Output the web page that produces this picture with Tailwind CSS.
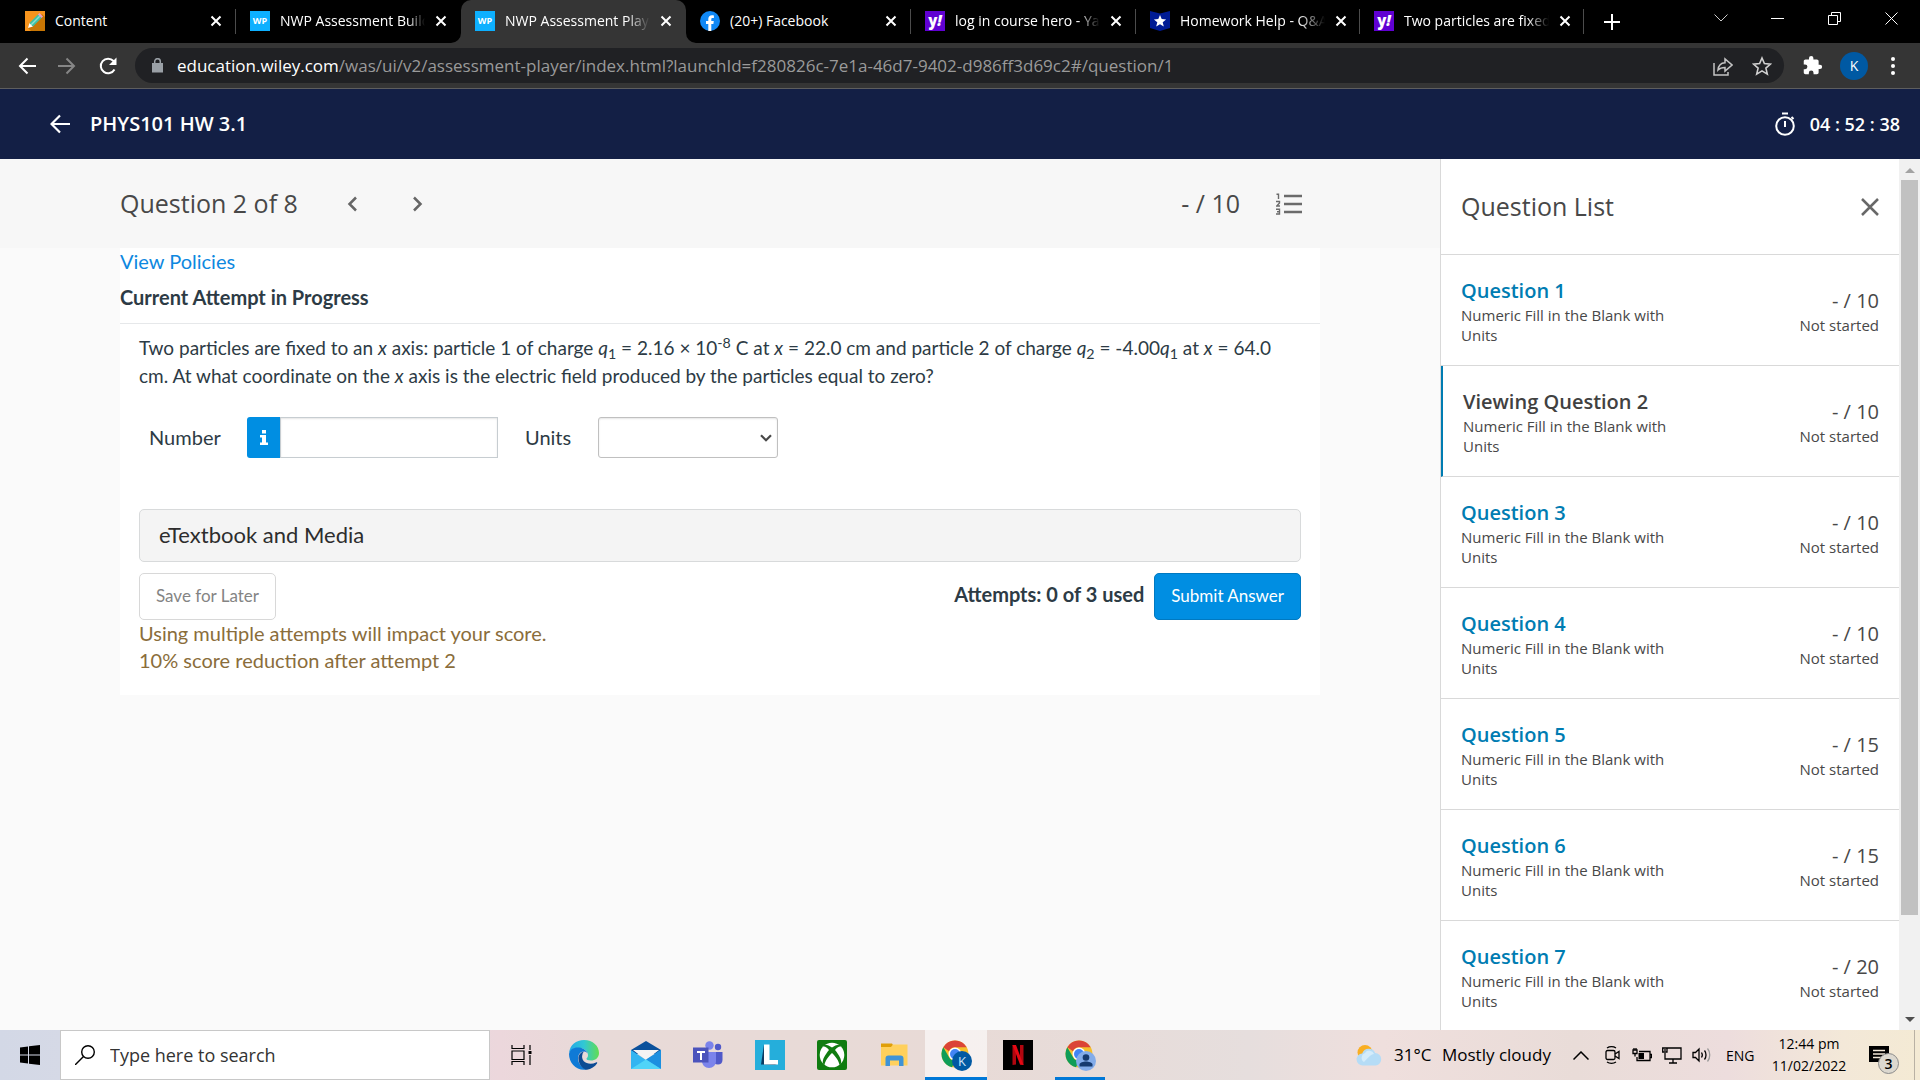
<!DOCTYPE html>
<html lang="en">
<head>
    <meta charset="UTF-8">
    <meta name="viewport" content="width=device-width, initial-scale=1.0">
    <title>NWP Assessment Player</title>
    <script src="https://cdn.jsdelivr.net/npm/@tailwindcss/browser@4"></script>
</head>
<body class="h-screen flex flex-col overflow-hidden bg-[#fafafa] font-['Open_Sans',sans-serif] text-[#484848]">

    <!-- TAB STRIP -->
    <div class="h-[43px] shrink-0 bg-black text-white text-[14px] flex pl-[11px]">
        <div class="w-[225px] flex items-center pl-3.5 pb-0.5 relative">
            <svg class="size-5 shrink-0" viewBox="0 0 20 20"><path fill="#f7941d" d="M0 0h20v20H0z"/><path fill="#c87604" d="M17 3l3 3v14H6l-3-3z"/><path fill="#fff" d="M3 17l1.500-5 3.500 3.500z"/><path fill="#3fc1a5" d="M4.500 12L13 3.500 16.500 7 8 15.500z"/><path fill="#8be0d0" d="M5.700 13.200l8.500-8.500 1 1-8.500 8.500z"/><path fill="#e9a0c8" d="M13 3.500L14.500 2 18 5.500 16.500 7z"/></svg>
            <span class="ml-2.5 w-[145px] whitespace-nowrap overflow-hidden">Content</span>
            <button class="ml-2.5 size-3" aria-label="Close tab"><svg viewBox="0 0 12 12" stroke="#fff" stroke-width="2"><path d="M1.500 1.500l9 9M10.500 1.500l-9 9"/></svg></button>
            <span class="absolute right-0 top-[9px] h-[25px] w-px bg-[#4c4c4c]"></span>
        </div>
        <div class="w-[225px] flex items-center pl-3.5 pb-0.5">
            <span class="size-5 shrink-0 bg-[#0db0ff] text-[9px] font-bold flex items-center justify-center">WP</span>
            <span class="ml-2.5 w-[145px] whitespace-nowrap overflow-hidden [mask-image:linear-gradient(to_right,#000_88%,transparent)]">NWP Assessment Builder</span>
            <button class="ml-2.5 size-3" aria-label="Close tab"><svg viewBox="0 0 12 12" stroke="#fff" stroke-width="2"><path d="M1.500 1.500l9 9M10.500 1.500l-9 9"/></svg></button>
        </div>
        <div class="w-[225px] flex items-center pl-3.5 pb-0.5 relative bg-[#353535] rounded-t-[10px]">
            <span class="size-5 shrink-0 bg-[#0db0ff] text-[9px] font-bold flex items-center justify-center">WP</span>
            <span class="ml-2.5 w-[145px] whitespace-nowrap overflow-hidden [mask-image:linear-gradient(to_right,#000_84%,transparent)]">NWP Assessment Player</span>
            <button class="ml-2.5 size-3" aria-label="Close tab"><svg viewBox="0 0 12 12" stroke="#fff" stroke-width="2"><path d="M1.500 1.500l9 9M10.500 1.500l-9 9"/></svg></button>
            <svg class="absolute right-full bottom-0 size-2.5" viewBox="0 0 10 10" fill="#353535"><path d="M10 0v10H0A10 10 0 0 0 10 0z"/></svg>
            <svg class="absolute left-full bottom-0 size-2.5" viewBox="0 0 10 10" fill="#353535"><path d="M0 0v10h10A10 10 0 0 1 0 0z"/></svg>
        </div>
        <div class="w-[225px] flex items-center pl-3.5 pb-0.5 relative">
            <svg class="size-5 shrink-0" viewBox="0 0 20 20"><circle cx="10" cy="10" r="10" fill="#1088f5"/><path fill="#fff" d="M8.300 20v-7H6v-3h2.300V8c0-2.500 1.500-3.800 3.700-3.800.9 0 1.700.1 1.900.2v2.500h-1.300c-1 0-1.300.5-1.300 1.300V10h2.500l-.4 3h-2.100v7z"/></svg>
            <span class="ml-2.5 w-[145px] whitespace-nowrap overflow-hidden">(20+) Facebook</span>
            <button class="ml-2.5 size-3" aria-label="Close tab"><svg viewBox="0 0 12 12" stroke="#fff" stroke-width="2"><path d="M1.500 1.500l9 9M10.500 1.500l-9 9"/></svg></button>
            <span class="absolute right-0 top-[9px] h-[25px] w-px bg-[#4c4c4c]"></span>
        </div>
        <div class="w-[225px] flex items-center pl-3.5 pb-0.5 relative">
            <span class="size-5 shrink-0 bg-[#6001d2] text-[15px] leading-4 font-extrabold flex items-center justify-center pb-0.5">y<i>!</i></span>
            <span class="ml-2.5 w-[145px] whitespace-nowrap overflow-hidden [mask-image:linear-gradient(to_right,#000_85%,transparent)]">log in course hero - Yahoo Search</span>
            <button class="ml-2.5 size-3" aria-label="Close tab"><svg viewBox="0 0 12 12" stroke="#fff" stroke-width="2"><path d="M1.500 1.500l9 9M10.500 1.500l-9 9"/></svg></button>
            <span class="absolute right-0 top-[9px] h-[25px] w-px bg-[#4c4c4c]"></span>
        </div>
        <div class="w-[224px] flex items-center pl-3.5 pb-0.5 relative">
            <svg class="size-5 shrink-0" viewBox="0 0 20 20"><path fill="#001b94" d="M0 0l10 2.500L20 0v17l-10 3-10-3z"/><path fill="#fff" d="M10 4l1.700 4.100 4.400.3-3.400 2.900 1.100 4.300L10 13.200l-3.800 2.400 1.100-4.300-3.400-2.900 4.400-.3z"/></svg>
            <span class="ml-2.5 w-[145px] whitespace-nowrap overflow-hidden [mask-image:linear-gradient(to_right,#000_82%,transparent)]">Homework Help - Q&amp;A from</span>
            <button class="ml-2.5 size-3" aria-label="Close tab"><svg viewBox="0 0 12 12" stroke="#fff" stroke-width="2"><path d="M1.500 1.500l9 9M10.500 1.500l-9 9"/></svg></button>
            <span class="absolute right-0 top-[9px] h-[25px] w-px bg-[#4c4c4c]"></span>
        </div>
        <div class="w-[224px] flex items-center pl-3.5 pb-0.5 relative">
            <span class="size-5 shrink-0 bg-[#6001d2] text-[15px] leading-4 font-extrabold flex items-center justify-center pb-0.5">y<i>!</i></span>
            <span class="ml-2.5 w-[145px] whitespace-nowrap overflow-hidden [mask-image:linear-gradient(to_right,#000_85%,transparent)]">Two particles are fixed to an</span>
            <button class="ml-2.5 size-3" aria-label="Close tab"><svg viewBox="0 0 12 12" stroke="#fff" stroke-width="2"><path d="M1.500 1.500l9 9M10.500 1.500l-9 9"/></svg></button>
            <span class="absolute right-0 top-[9px] h-[25px] w-px bg-[#4c4c4c]"></span>
        </div>
        <button class="ml-5 w-4" aria-label="New tab"><svg viewBox="0 0 16 16" stroke="#fff" stroke-width="2"><path d="M8 0v16M0 8h16"/></svg></button>
        <div class="ml-auto h-9 flex items-center">
            <button class="w-[57px] flex justify-center" aria-label="Search tabs"><svg class="w-3.5 h-2" viewBox="0 0 14 8" fill="none" stroke="#ccc"><path d="M.500.500L7 7 13.500.500"/></svg></button>
            <button class="w-[57px] flex justify-center" aria-label="Minimise"><svg class="w-[13px] h-3" viewBox="0 0 13 12" stroke="#fff"><path d="M0 6.500h13"/></svg></button>
            <button class="w-[57px] flex justify-center" aria-label="Restore"><svg class="size-[13px]" viewBox="0 0 13 13" fill="none" stroke="#fff"><path d="M.500 3.500h9v9h-9zM3.500 3V.500h9v9H10"/></svg></button>
            <button class="w-[57px] flex justify-center" aria-label="Close window"><svg class="size-[13px]" viewBox="0 0 13 13" stroke="#fff"><path d="M.500.500l12 12M12.500.500l-12 12"/></svg></button>
        </div>
    </div>

    <!-- ADDRESS BAR -->
    <div class="h-[46px] shrink-0 bg-[#353535] border-b border-[#5e5e5e] flex items-center pl-4">
        <button class="w-[22px] mr-[18px]" aria-label="Back"><svg viewBox="0 0 22 22" fill="none" stroke="#fff" stroke-width="2"><path d="M20 11H4M11.500 3.500L4 11l7.500 7.500"/></svg></button>
        <button class="w-[22px] mr-[19px]" aria-label="Forward"><svg viewBox="0 0 22 22" fill="none" stroke="#868686" stroke-width="2"><path d="M2 11h16M10.500 3.500L18 11l-7.500 7.500"/></svg></button>
        <button class="w-[22px] mr-4" aria-label="Reload"><svg viewBox="0 0 22 22" fill="none" stroke="#fff" stroke-width="2"><path d="M17.500 14.500A7.300 7.300 0 1 1 16.500 6L18 7.500"/><path fill="#fff" stroke="none" d="M19.500 2.500V10H12z"/></svg></button>
        <div class="flex-1 h-[35px] rounded-full bg-[#202124] flex items-center pl-[17px] pr-3">
            <svg class="w-[11px] h-[15px] mr-3.5 shrink-0" viewBox="0 0 11 15"><path fill="#9aa0a6" d="M0 5h11v9.500H0z"/><path fill="none" stroke="#9aa0a6" stroke-width="1.500" d="M2.700 6V3.500a2.800 2.800 0 0 1 5.600 0V6"/></svg>
            <span class="flex-1 text-[17px] text-[#9a9a9a] whitespace-nowrap"><span class="text-white">education.wiley.com</span>/was/ui/v2/assessment-player/index.html?launchId=f280826c-7e1a-46d7-9402-d986ff3d69c2#/question/1</span>
            <button class="w-5 mr-[19px]" aria-label="Share"><svg viewBox="0 0 20 20" fill="none" stroke="#c4c4c4" stroke-width="1.500"><path d="M1 7v12h14v-3"/><path d="M5 14c.5-5 3-7 7-7.200V3l7 6-7 6v-3.500c-3 0-5 .5-7 2.500z"/></svg></button>
            <button class="w-5" aria-label="Bookmark"><svg viewBox="0 0 20 20" fill="none" stroke="#d0d0d0" stroke-width="1.600"><path d="M10 2l2.400 5.600 6.100.5-4.600 4 1.400 6L10 14.900l-5.300 3.200 1.400-6-4.600-4 6.100-.5z"/></svg></button>
        </div>
        <div class="flex items-center pl-[18px] pr-[25px]">
            <button class="w-[21px] mr-[17px]" aria-label="Extensions"><svg viewBox="0 0 24 24" fill="#fff"><path d="M20.500 11H19V7c0-1.100-.9-2-2-2h-4V3.500a2.500 2.500 0 0 0-5 0V5H4c-1.100 0-2 .9-2 2v3.800h1.500a2.700 2.700 0 0 1 0 5.400H2V20c0 1.100.9 2 2 2h3.800v-1.500a2.700 2.700 0 0 1 5.400 0V22H17c1.100 0 2-.9 2-2v-4h1.500a2.500 2.500 0 0 0 0-5z"/></svg></button>
            <button class="size-7 mr-[23px] rounded-full bg-[#0059a3] text-white text-[14px] leading-7">K</button>
            <button class="w-1 h-[18px]" aria-label="Menu"><svg viewBox="0 0 4 18" fill="#fff"><circle cx="2" cy="2" r="2"/><circle cx="2" cy="9" r="2"/><circle cx="2" cy="16" r="2"/></svg></button>
        </div>
    </div>

    <!-- APP HEADER -->
    <header class="h-[70px] shrink-0 bg-[#131f45] text-white font-semibold flex items-center pl-[50px] pr-5">
        <button class="w-5 mr-5" aria-label="Back to course"><svg viewBox="0 0 20 20" fill="none" stroke="#fff" stroke-width="2.200"><path d="M20 10H2M10 1.500L1.500 10l8.500 8.500"/></svg></button>
        <h1 class="text-[20px]">PHYS101 HW 3.1</h1>
        <svg class="ml-auto w-[22px] h-6 mr-3.5" viewBox="0 0 22 24" fill="none" stroke="#fff" stroke-width="2"><circle cx="11" cy="14" r="8.800"/><path d="M8 1.500h6M11 9v6M17.500 5l2 2"/></svg>
        <span class="text-[18px]">04 : 52 : 38</span>
    </header>

    <div class="flex-1 min-h-0 flex">
        <!-- QUESTION -->
        <main class="flex-1 min-w-0">
            <div class="h-[89px] bg-[#f7f7f7] px-[120px] flex items-center text-[25px]">
                <h2>Question 2 of 8</h2>
                <button class="ml-[49px] w-[11px]" aria-label="Previous question"><svg viewBox="0 0 11 16" fill="none" stroke="#666" stroke-width="2.500"><path d="M9 1.500L2.500 8 9 14.500"/></svg></button>
                <button class="ml-[54px] w-[11px]" aria-label="Next question"><svg viewBox="0 0 11 16" fill="none" stroke="#666" stroke-width="2.500"><path d="M2 1.500L8.500 8 2 14.500"/></svg></button>
                <span class="ml-auto">- / 10</span>
                <button class="ml-9 mr-[18px] w-[26px]" aria-label="Question list"><svg viewBox="0 0 26 22" fill="none" stroke="#6b6b6b"><path stroke-width="2.400" d="M8 3h18M8 11h18M8 19h18"/><path stroke-width="1.400" d="M.500 1.200h2V6M0 8.500h3.500v1.500L.700 13H4M0 16.200h3.500v4.800H0M1 18.700h2.500"/></svg></button>
            </div>
            <section class="mx-[120px] pb-[21px] bg-white font-['Lato',sans-serif] text-[20px] leading-7 text-[#2d3b45]">
                <a href="#" class="block w-fit leading-[26px] text-[#0e88e0]">View Policies</a>
                <h3 class="font-bold pt-[9px] pb-3 border-b border-[#e6e8ea]">Current Attempt in Progress</h3>
                <div class="pt-2.5 px-[19px]">
                    <p class="text-[19px]">Two particles are fixed to an <i>x</i> axis: particle 1 of charge <i>q</i><sub>1</sub> = 2.16 × 10<sup>-8</sup> C at <i>x</i> = 22.0 cm and particle 2 of charge <i>q</i><sub>2</sub> = -4.00<i>q</i><sub>1</sub> at <i>x</i> = 64.0<br>cm. At what coordinate on the <i>x</i> axis is the electric field produced by the particles equal to zero?</p>
                    <div class="mt-[27px] pl-2.5 flex items-center">
                        <label for="number" class="w-[98px] pb-0.5">Number</label>
                        <button class="w-[33px] h-[41px] rounded-l-[3px] bg-[#008ee2] flex items-center justify-center" aria-label="Answer information"><svg class="w-2 h-[15px]" viewBox="0 0 8 15" fill="#fff"><path d="M2 0h4v3.500H2zM0 5h6v7.500h2V15H0v-2.500h2v-5H0z"/></svg></button>
                        <input id="number" type="text" class="w-[218px] h-[41px] px-2 bg-white border border-[#c7cdd1] shadow-[inset_0_1px_2px_rgba(0,0,0,0.1)]">
                        <label for="units" class="ml-[27px] w-[73px] pb-0.5">Units</label>
                        <div class="relative">
                            <select id="units" class="appearance-none w-[180px] h-[41px] px-2 bg-white border border-[#c0c0c0] rounded-[3px] shadow-[inset_0_1px_2px_rgba(0,0,0,0.1)]"><option></option></select>
                            <svg class="absolute right-1.5 top-[17px] w-3 h-2 pointer-events-none" viewBox="0 0 12 8" fill="none" stroke="#484848" stroke-width="2.200"><path d="M1 1.200l5 5 5-5"/></svg>
                        </div>
                    </div>
                    <button class="mt-[51px] w-full h-[53px] px-[19px] pb-0.5 text-left text-[22px] text-[#2d2d2d] bg-[#f4f4f4] border border-[#d8dadb] rounded-[5px]">eTextbook and Media</button>
                    <div class="mt-[11px] h-[47px] flex items-center">
                        <button class="h-[47px] px-4 pb-0.5 text-[17px] text-[#848484] border border-[#d8d8d8] rounded-[5px]">Save for Later</button>
                        <strong class="ml-auto mr-2.5 pb-1.5">Attempts: 0 of 3 used</strong>
                        <button class="h-[47px] px-4 pb-0.5 text-[17px] text-white bg-[#008ee2] border border-[#0079c1] rounded-[5px]">Submit Answer</button>
                    </div>
                    <p class="leading-[27px] text-[#8a6d3b]">Using multiple attempts will impact your score.<br>10% score reduction after attempt 2</p>
                </div>
            </section>
        </main>

        <!-- QUESTION LIST PANEL -->
        <aside class="w-[480px] shrink-0 flex bg-white border-l border-[#d9d9d9]">
            <div class="flex-1 min-w-0 overflow-hidden">
                <div class="h-24 px-5 flex items-center justify-between border-b border-[#d9d9d9] text-[25px]">
                    <h2>Question List</h2>
                    <button class="w-[18px]" aria-label="Close list"><svg viewBox="0 0 18 18" stroke="#686868" stroke-width="2.500"><path d="M1 1l16 16M17 1L1 17"/></svg></button>
                </div>
                <ul id="question-list"></ul>
            </div>
            <div class="w-[21px] bg-[#f1f1f1] flex flex-col items-center">
                <svg class="h-[21px] w-2.5 shrink-0" viewBox="0 0 10 21" fill="#a3a3a3"><path d="M0 14h10L5 9z"/></svg>
                <div class="w-[17px] h-[735px] bg-[#c1c1c1]"></div>
                <svg class="mt-auto h-[21px] w-2.5 shrink-0" viewBox="0 0 10 21" fill="#505050"><path d="M0 8h10l-5 5z"/></svg>
            </div>
        </aside>
    </div>

    <!-- TASKBAR -->
    <footer class="h-[50px] shrink-0 flex items-stretch text-black bg-[linear-gradient(90deg,#d3d8e6_0%,#dcdce6_14%,#ecd7dc_26%,#e8dad8_31%,#e8dad6_50%,#e6dedd_65%,#efdfdd_72%,#e9dcd8_82%,#eddddd_90%,#f3e8d8_96%,#f4ead4_100%)]">
        <button class="w-[60px] flex items-center justify-center" aria-label="Start"><svg class="size-5" viewBox="0 0 20 20"><path d="M0 2.500L8 1.400v8.100H0zM9 1.200L20 0v9.500H9zM0 10.500h8v8.100l-8-1.100zM9 10.500h11V20L9 18.800z"/></svg></button>
        <label class="w-[430px] flex items-center bg-white border border-[#c8c8c8] pl-3.5">
            <svg class="size-5 mr-[15px] shrink-0" viewBox="0 0 20 20" fill="none" stroke="#000" stroke-width="1.400"><circle cx="13" cy="7" r="6.300"/><path d="M8.500 11.500L0 20"/></svg>
            <input type="text" aria-label="Search" placeholder="Type here to search" class="flex-1 text-[18px] placeholder:text-[#333] outline-none">
        </label>
        <button class="ml-px w-[62px] flex items-center justify-center" aria-label="Task view"><svg class="w-[22px] h-5" viewBox="0 0 22 20" fill="none" stroke="#000" stroke-width="1.200"><path d="M1 0v3.500h12V0M1 6h12v8.500H1zM1 20v-3.500h12V20M19 0v5M19 10v10"/><path fill="#000" stroke="none" d="M17.500 6h3v3h-3z"/></svg></button>
        <button class="w-[62px] flex items-center justify-center" aria-label="Edge"><svg class="size-[30px]" viewBox="0 0 30 30">
            <defs><linearGradient id="eg" x1="0" x2="1"><stop offset="0" stop-color="#24a8e8"/><stop offset=".5" stop-color="#31c8d4"/><stop offset="1" stop-color="#63dd51"/></linearGradient></defs>
            <path fill="url(#eg)" d="M0 13C1 5 7 0 15 0c9 0 15 6 15 13 0 5-4 7.500-8 7.500-3 0-5-1-4.500-2 1-1 1.500-2 1.500-3.500C19 11 15 8 10 8 5 8 2 10 0 13z"/><path fill="#0f7ad6" d="M0 14C1 9 5 7 10 7.500c5 .5 9 4 9 7.500 0-2-2-3.500-4-3.500-4 0-6 3.500-6 7 0 5 4 9 9 11-10 2-18-6-18-15.500z"/><path fill="#0c4b94" d="M15 11.500c-4 1-6 4-5.500 8C10 25 14 29.500 18 29.700c4-.5 8-3 10-6.200.5-1 0-1.500-1-1C20 26 11 22 13.500 14c.3-1 1-2 1.500-2.500z"/></svg></button>
        <button class="w-[62px] flex items-center justify-center" aria-label="Mail"><svg class="size-[30px]" viewBox="0 0 30 30"><path fill="#0b519c" d="M0 10L15 1l15 9v4H0z"/><path fill="#f3f3f3" d="M2 10h26L15 20z"/><path fill="#32b5f1" d="M0 10l15 10L30 10v19H0z"/><path fill="#f3f3f3" d="M3 10h24l-12 9z"/><path fill="#1b8fe0" d="M15 19.500L30 10v19z"/><path fill="#50d4f8" d="M0 29l15-9.500L30 29z"/></svg></button>
        <button class="w-[62px] flex items-center justify-center" aria-label="Teams"><svg class="size-[30px]" viewBox="0 0 30 30"><circle cx="25" cy="7" r="3.200" fill="#5059c9"/><path fill="#5059c9" d="M20 12h9.500v8c0 3-2 4.500-4.500 4.500-3 0-5-2-5-4.500z"/><circle cx="16.500" cy="5.500" r="4.200" fill="#7b83eb"/><path fill="#7b83eb" d="M9 12h14v9c0 4-3 7-7 7s-7-3-7-7z"/><path fill="#4b53bc" d="M0 7.500h15.500v15H0z"/><path fill="#fff" d="M4 11h8v2H9v7H7v-7H4z"/></svg></button>
        <button class="w-[62px] flex items-center justify-center" aria-label="LockDown"><svg class="size-[30px]" viewBox="0 0 30 30"><path fill="#25aedb" d="M0 0h30v30H0z"/><path fill="#0b3b63" d="M9 4.500L6 24.500 22 25l-10-5z"/><path fill="#fff" d="M9 4.500h5.500v15.500H23v4.500H9z"/></svg></button>
        <button class="w-[62px] flex items-center justify-center" aria-label="Xbox"><svg class="size-[30px]" viewBox="0 0 30 30"><rect width="30" height="30" rx="2" fill="#107c10"/><circle cx="15" cy="15" r="12.300" fill="#fff"/><path fill="#107c10" d="M7 5c2-1 5 .5 8 2.500 3-2 6-3.500 8-2.500l1 1.500c-2-.5-4 1-6 3.500 4 5 7 9.500 6 13.500l-1.500 1.500C22 21 18.500 16.500 15 13c-3.500 3.500-7 8-7.500 12L6 23.500c-1-4 2-8.500 6-13.500-2-2.500-4-4-6-3.500z"/></svg></button>
        <button class="w-[62px] flex items-center justify-center" aria-label="File Explorer"><svg class="size-[30px]" viewBox="0 0 30 30"><path fill="#e09f09" d="M2 3.500h11l2 3v4H2z"/><path fill="#ffd05c" d="M2 7h10l2-2.500h14.500V25.500H2z"/><path fill="#3f93d6" d="M6.500 26v-7.500c0-2 1-3 3-3h12c2 0 3 1 3 3V26H20v-5.500h-9V26z"/></svg></button>
        <button class="w-[62px] flex items-center justify-center bg-white/60 border-b-3 border-[#0078d7] pt-[3px]" aria-label="Chrome profile K"><svg class="w-8 h-[31px]" viewBox="0 0 32 31">
            <circle cx="15" cy="14" r="13.500" fill="#f5bf2b"/><path fill="#db4437" d="M3.300 7.300a13.500 13.500 0 0 1 23.400 0H15a6.700 6.700 0 0 0-6 4z"/><path fill="#0f9d58" d="M3.300 7.300L9.200 17.500A6.700 6.700 0 0 0 15 20.700l-3 6.500A13.500 13.500 0 0 1 3.300 7.300z"/><circle cx="15" cy="14" r="6.500" fill="#fff"/><circle cx="15" cy="14" r="5" fill="#4285f4"/><circle cx="22" cy="21" r="10" fill="#0059a3"/><text x="22" y="26" text-anchor="middle" font-size="13" fill="#cfe4f7">K</text></svg></button>
        <button class="w-[62px] flex items-center justify-center" aria-label="Netflix"><svg class="size-[30px]" viewBox="0 0 30 30"><path d="M0 0h30v30H0z"/><path fill="#b1060f" d="M9.500 5H13v19.500l-3.500.5zM17 5h3.500v20L17 24.500z"/><path fill="#e50914" d="M9.500 5H13l7.500 20-3.500-.5z"/></svg></button>
        <button class="w-[62px] px-1.5 flex" aria-label="Chrome guest"><span class="flex-1 flex items-center justify-center border-b-3 border-[#0078d7] pt-[3px] h-[50px]"><svg class="w-8 h-[31px]" viewBox="0 0 32 31">
            <circle cx="15" cy="14" r="13.500" fill="#f5bf2b"/><path fill="#db4437" d="M3.300 7.300a13.500 13.500 0 0 1 23.400 0H15a6.700 6.700 0 0 0-6 4z"/><path fill="#0f9d58" d="M3.300 7.300L9.200 17.500A6.700 6.700 0 0 0 15 20.700l-3 6.500A13.500 13.500 0 0 1 3.300 7.300z"/><circle cx="15" cy="14" r="6.500" fill="#fff"/><circle cx="15" cy="14" r="5" fill="#4285f4"/><circle cx="22" cy="21" r="10" fill="#83acea"/><circle cx="22" cy="17.500" r="3.300" fill="#163a70"/><path fill="#163a70" d="M15.500 26.500v-2c0-2 4-3 6.500-3s6.500 1 6.500 3v2z"/></svg></span></button>

        <!-- TRAY -->
        <div class="ml-auto flex items-center text-[17px] whitespace-nowrap">
            <svg class="w-[26px] h-[22px] mr-3" viewBox="0 0 26 22"><circle cx="9" cy="8.500" r="7.500" fill="#f9ae22"/><path fill="#b5dcf6" d="M7 21.500a6 6 0 0 1-.8-12 7 7 0 0 1 13-.5 6.300 6.300 0 0 1 .8 12.500z"/><path fill="#d4ecfb" d="M8 18a5 5 0 0 1 1-9 5 5 0 0 1 9 1c-3 0-6 4-10 8z"/></svg>
            <span class="w-12">31°C</span>
            <span class="w-[131px]">Mostly cloudy</span>
            <button class="w-4 mr-4" aria-label="Show hidden icons"><svg viewBox="0 0 16 9" fill="none" stroke="#000" stroke-width="1.500"><path d="M.500 8.500L8 1l7.500 7.500"/></svg></button>
            <svg class="w-[15px] h-[18px] mr-3" viewBox="0 0 15 18" fill="none" stroke="#000" stroke-width="1.300"><rect x="1" y="4.500" width="9" height="9" rx="1.500"/><path d="M10 8l4-2.500v7L10 10M2 2C4.500.300 8.500.300 11 2M2 16c2.500 1.700 6.500 1.700 9 0"/></svg>
            <svg class="w-5 h-[14px] mr-2.5" viewBox="0 0 20 14" fill="none" stroke="#000" stroke-width="1.300"><path d="M7 3.500h11v9H5V9M18 6.500h1.500v3H18M1 2h4v3.500H1zM2 0v2M4 0v2M3 5.500v3"/><path fill="#000" stroke="none" d="M6.500 5H12v6H6.500z"/></svg>
            <svg class="w-5 h-[17px] mr-2.5" viewBox="0 0 20 17" fill="none" stroke="#000" stroke-width="1.300"><path d="M5 1h14v11H3V6M11 12v4M7 16h8M.700 1H5v4H.700zM3 2v2"/></svg>
            <svg class="w-5 h-4 mr-3.5" viewBox="0 0 20 16" fill="none" stroke="#000" stroke-width="1.300"><path d="M1 5.500h2.500L7 2v12l-3.500-3.500H1zM9.500 5.500c1 1.500 1 3.500 0 5M12.500 3.500c2 2.500 2 6.500 0 9"/><path stroke="#999" d="M15.500 1.500c3 3.500 3 9.500 0 13"/></svg>
            <span class="w-[45px] text-[14px]">ENG</span>
            <div class="w-[76px] text-[14px] leading-[22px] text-center">12:44 pm<br>11/02/2022</div>
            <button class="relative ml-[22px] w-[45px] h-[22px]" aria-label="3 new notifications">
                <svg class="w-5 h-[19px]" viewBox="0 0 20 19"><path d="M0 0h20v16h-7l-3 3v-3H0z"/><path stroke="#f3e8d8" stroke-width="1.300" d="M4 4.500h12M4 8h12M4 11.500h9"/></svg>
                <span class="absolute left-[9px] top-[9px] size-[21px] rounded-full bg-[#dcd8cf] border border-[#8a8a8a] text-[14px] leading-[19px] font-semibold">3</span>
            </button>
        </div>
        <button class="w-1.5 border-l border-[#b9b1a4]" aria-label="Show desktop"></button>
    </footer>

    <script>
        const points = [10, 10, 10, 10, 15, 15, 20];
        const current = 2;

        // Render the question list
        document.getElementById('question-list').innerHTML = points.map((max, i) => {
            const n = i + 1;
            const active = n === current;
            return `
                <li class="h-[111px] flex items-center justify-between px-5 border-b border-[#d9d9d9] ${active ? 'border-l-2 border-l-[#007cb2]' : ''}">
                    <div class="w-[230px]">
                        ${active
                            ? `<h3 class="text-[20px] leading-[29px] font-semibold text-[#414141]">Viewing Question ${n}</h3>`
                            : `<a href="#" class="block text-[20px] leading-[29px] font-semibold text-[#007cb2]">Question ${n}</a>`}
                        <p class="text-[15px] leading-5">Numeric Fill in the Blank with Units</p>
                    </div>
                    <div class="text-right">
                        <p class="text-[20px] leading-[29px]">- / ${max}</p>
                        <p class="text-[15px] leading-5">Not started</p>
                    </div>
                </li>`;
        }).join('');
    </script>

</body>
</html>
